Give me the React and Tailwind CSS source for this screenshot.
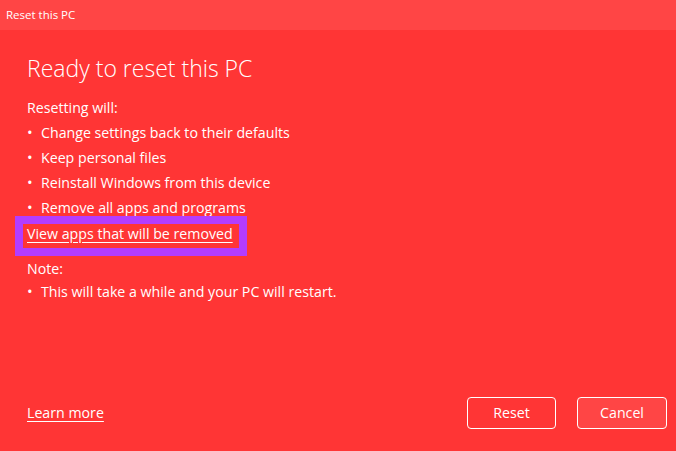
import React from 'react';

const items = [
  'Change settings back to their defaults',
  'Keep personal files',
  'Reinstall Windows from this device',
  'Remove all apps and programs',
];

function Bullet({ children }) {
  return (
    <li className="flex h-[25px] items-center">
      <span className="w-[14px] text-[15px]">•</span>
      <span>{children}</span>
    </li>
  );
}

export default function App() {
  return (
    <div className="w-[676px] h-[451px] bg-[#ff3535] text-white flex flex-col font-['Open_Sans',sans-serif] overflow-hidden">
      <div className="h-[30px] bg-[#ff4545] flex items-center px-[6px] text-[11.5px]">
        Reset this PC
      </div>

      <div className="flex-1 px-[27px] pt-[21px] flex flex-col">
        <h1 className="text-[23px] font-light leading-[34px]">Ready to reset this PC</h1>

        <div className="mt-[10px] text-[14.2px]">
          <div className="h-[25px] flex items-center">Resetting will:</div>
          <ul>
            {items.map((t) => (
              <Bullet key={t}>{t}</Bullet>
            ))}
          </ul>
          <div className="relative h-[27px] flex items-center">
            <a className="underline underline-offset-[3px]">View apps that will be removed</a>
            <div className="absolute left-[-12px] top-[-4px] w-[232px] h-[40px] border-[8px] border-[#b33cff]" />
          </div>
          <div className="h-[30px] mt-[2px] flex items-end">Note:</div>
          <ul>
            <Bullet>This will take a while and your PC will restart.</Bullet>
          </ul>
        </div>

        <div className="mt-auto mb-[22px] flex items-center justify-between">
          <a className="text-[14.2px] underline underline-offset-[3px]">Learn more</a>
          <div className="flex gap-[21px] mr-[-18px]">
            <button className="w-[89px] h-[32px] rounded-[4px] border border-white text-[14.2px]">
              Reset
            </button>
            <button className="w-[90px] h-[32px] rounded-[4px] border border-white bg-[#ff4545] text-[14.2px]">
              Cancel
            </button>
          </div>
        </div>
      </div>
    </div>
  );
}
